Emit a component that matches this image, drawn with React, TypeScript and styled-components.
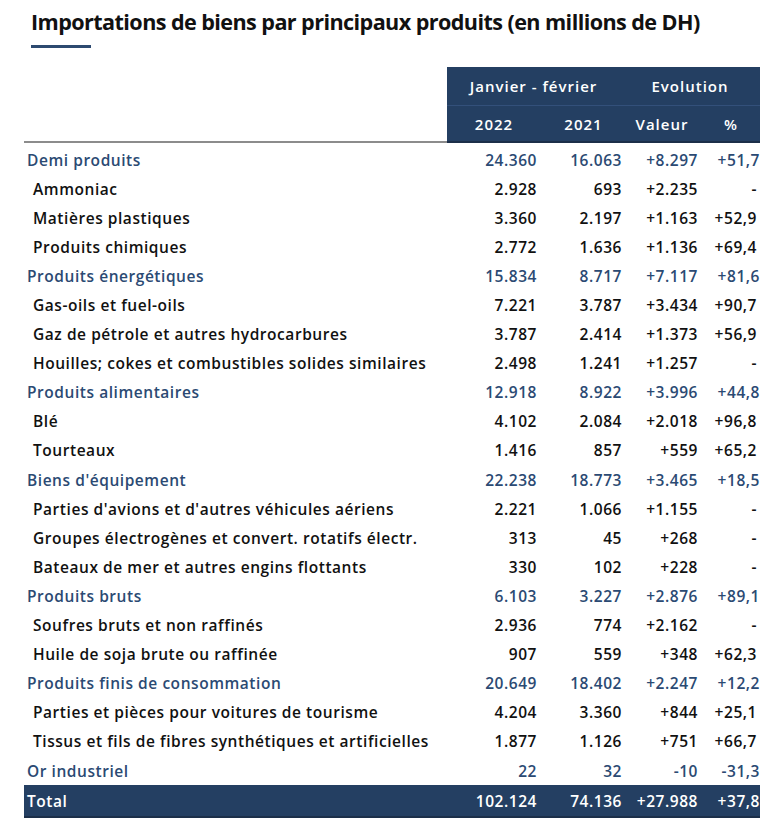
import React from "react";
import styled, { createGlobalStyle } from "styled-components";

const Global = createGlobalStyle`
  html, body { margin: 0; padding: 0; background: #ffffff; }
  body { font-family: "Open Sans", "Noto Sans", sans-serif; }
`;

const BLUE = "#243f62";
const CAT = "#2b4a73";

const Page = styled.div`
  width: 778px;
  height: 832px;
  padding-top: 8px;
  box-sizing: border-box;
  overflow: hidden;
`;

const Title = styled.h1`
  margin: 0 0 0 31px;
  font-family: "Open Sans", sans-serif;
  font-weight: 700;
  font-size: 21.6px;
  line-height: 28px;
  letter-spacing: -0.58px;
  color: #111;
  white-space: nowrap;
`;

const TitleBar = styled.div`
  margin: 9px 0 0 31px;
  width: 60px;
  height: 3px;
  background: #2d4a70;
`;

const Table = styled.div`
  margin: 19px 0 0 24px;
  width: 736px;
  overflow: hidden;
`;

const Head = styled.div`
  display: grid;
  grid-template-columns: 423px 313px;
`;

const HeadSpacer = styled.div`
  border-bottom: 2px solid #8c8c8c;
`;

const HeadBlock = styled.div`
  background: ${BLUE};
  border-bottom: 2px solid #1c2f49;
  display: grid;
  grid-template-columns: 94px 85px 76px 58px;
  grid-template-rows: 39px 35px;
`;

const HeadCell = styled.div<{ $span?: number; $top?: boolean; $shift?: number }>`
  grid-column: span ${(p) => p.$span ?? 1};
  display: flex;
  align-items: center;
  justify-content: center;
  color: #ffffff;
  font-weight: 600;
  font-size: 15px;
  letter-spacing: 1px;
  padding-right: ${(p) => p.$shift ?? 0}px;
  border-bottom: ${(p) => (p.$top ? "1px solid #33507a" : "none")};
  white-space: nowrap;
`;

const Body = styled.div`
  padding-top: 2px;
`;

const Row = styled.div<{ $kind: "cat" | "item" | "total" }>`
  display: grid;
  grid-template-columns: 423px 94px 85px 76px 58px;
  height: ${(p) => (p.$kind === "total" ? "33px" : "29.1px")};
  align-items: center;
  background: ${(p) => (p.$kind === "total" ? BLUE : "transparent")};
  border-bottom: ${(p) => (p.$kind === "total" ? "2px solid #1c2f49" : "none")};
  box-sizing: border-box;
  color: ${(p) => (p.$kind === "cat" ? CAT : p.$kind === "total" ? "#ffffff" : "#111111")};
  font-weight: 600;
  font-size: 15.5px;
  letter-spacing: 0.55px;
  white-space: nowrap;
`;

const Label = styled.div<{ $indent: number }>`
  padding-left: ${(p) => p.$indent}px;
`;

const Num = styled.div<{ $pad: number }>`
  text-align: right;
  padding-right: ${(p) => p.$pad}px;
`;

type R = { k: "cat" | "item"; l: string; a: string; b: string; c: string; d: string };

const rows: R[] = [
  { k: "cat", l: "Demi produits", a: "24.360", b: "16.063", c: "+8.297", d: "+51,7" },
  { k: "item", l: "Ammoniac", a: "2.928", b: "693", c: "+2.235", d: "-" },
  { k: "item", l: "Matières plastiques", a: "3.360", b: "2.197", c: "+1.163", d: "+52,9" },
  { k: "item", l: "Produits chimiques", a: "2.772", b: "1.636", c: "+1.136", d: "+69,4" },
  { k: "cat", l: "Produits énergétiques", a: "15.834", b: "8.717", c: "+7.117", d: "+81,6" },
  { k: "item", l: "Gas-oils et fuel-oils", a: "7.221", b: "3.787", c: "+3.434", d: "+90,7" },
  { k: "item", l: "Gaz de pétrole et autres hydrocarbures", a: "3.787", b: "2.414", c: "+1.373", d: "+56,9" },
  { k: "item", l: "Houilles; cokes et combustibles solides similaires", a: "2.498", b: "1.241", c: "+1.257", d: "-" },
  { k: "cat", l: "Produits alimentaires", a: "12.918", b: "8.922", c: "+3.996", d: "+44,8" },
  { k: "item", l: "Blé", a: "4.102", b: "2.084", c: "+2.018", d: "+96,8" },
  { k: "item", l: "Tourteaux", a: "1.416", b: "857", c: "+559", d: "+65,2" },
  { k: "cat", l: "Biens d'équipement", a: "22.238", b: "18.773", c: "+3.465", d: "+18,5" },
  { k: "item", l: "Parties d'avions et d'autres véhicules aériens", a: "2.221", b: "1.066", c: "+1.155", d: "-" },
  { k: "item", l: "Groupes électrogènes et convert. rotatifs électr.", a: "313", b: "45", c: "+268", d: "-" },
  { k: "item", l: "Bateaux de mer et autres engins flottants", a: "330", b: "102", c: "+228", d: "-" },
  { k: "cat", l: "Produits bruts", a: "6.103", b: "3.227", c: "+2.876", d: "+89,1" },
  { k: "item", l: "Soufres bruts et non raffinés", a: "2.936", b: "774", c: "+2.162", d: "-" },
  { k: "item", l: "Huile de soja brute ou raffinée", a: "907", b: "559", c: "+348", d: "+62,3" },
  { k: "cat", l: "Produits finis de consommation", a: "20.649", b: "18.402", c: "+2.247", d: "+12,2" },
  { k: "item", l: "Parties et pièces pour voitures de tourisme", a: "4.204", b: "3.360", c: "+844", d: "+25,1" },
  { k: "item", l: "Tissus et fils de fibres synthétiques et artificielles", a: "1.877", b: "1.126", c: "+751", d: "+66,7" },
  { k: "cat", l: "Or industriel", a: "22", b: "32", c: "-10", d: "-31,3" },
];

export default function App() {
  return (
    <Page>
      <Global />
      <Title>Importations de biens par principaux produits (en millions de DH)</Title>
      <TitleBar />
      <Table>
        <Head>
          <HeadSpacer />
          <HeadBlock>
            <HeadCell $span={2} $top $shift={6}>Janvier - février</HeadCell>
            <HeadCell $span={2} $top $shift={6}>Evolution</HeadCell>
            <HeadCell>2022</HeadCell>
            <HeadCell>2021</HeadCell>
            <HeadCell $shift={4}>Valeur</HeadCell>
            <HeadCell>%</HeadCell>
          </HeadBlock>
        </Head>
        <Body>
          {rows.map((r, i) => (
            <Row key={i} $kind={r.k}>
              <Label $indent={r.k === "cat" ? 3 : 9}>{r.l}</Label>
              <Num $pad={4}>{r.a}</Num>
              <Num $pad={4}>{r.b}</Num>
              <Num $pad={4}>{r.c}</Num>
              <Num $pad={r.k === "cat" ? -1 : 3}>{r.d}</Num>
            </Row>
          ))}
          <Row $kind="total">
            <Label $indent={3}>Total</Label>
            <Num $pad={4}>102.124</Num>
            <Num $pad={4}>74.136</Num>
            <Num $pad={4}>+27.988</Num>
            <Num $pad={0}>+37,8</Num>
          </Row>
        </Body>
      </Table>
    </Page>
  );
}
